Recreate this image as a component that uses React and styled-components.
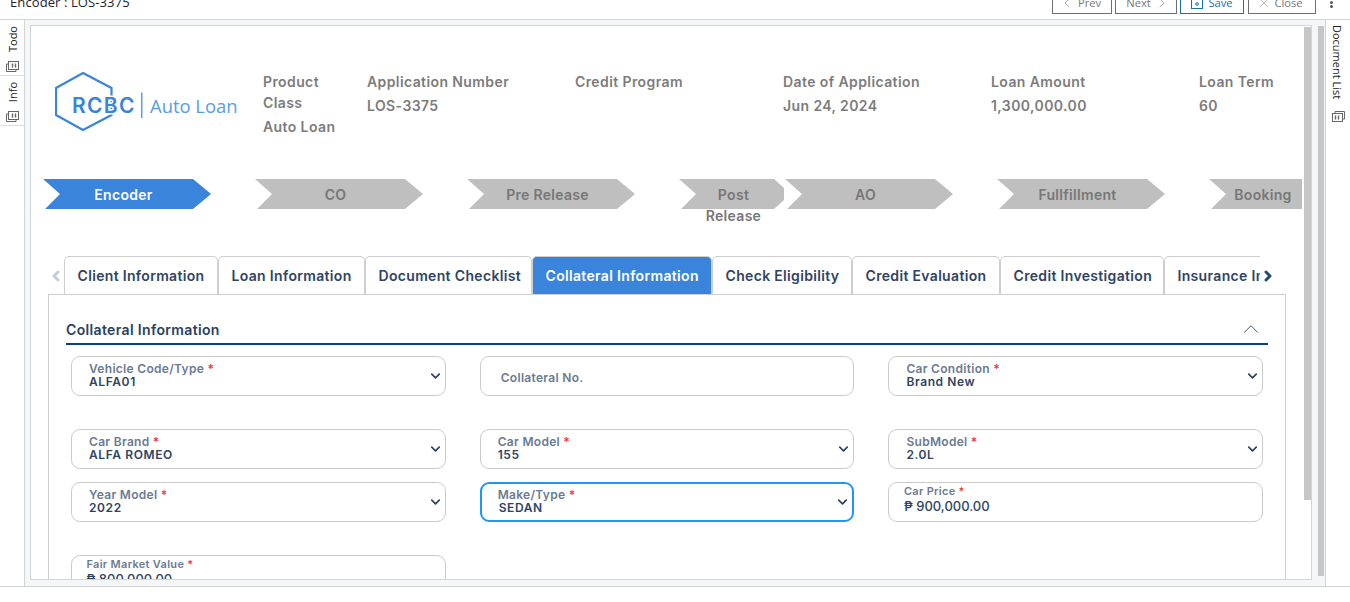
import React from 'react';
import styled, { createGlobalStyle } from 'styled-components';
import { ChevronLeft, ChevronRight, ChevronUp, ChevronDown, X } from 'lucide-react';

const GlobalStyle = createGlobalStyle`
  html, body {
    margin: 0;
    height: 100%;
    overflow: hidden;
    background: #fff;
  }
  * { box-sizing: border-box; }
`;

const Page = styled.div`
  width: 1350px;
  height: 602px;
  overflow: hidden;
  font-family: Inter, "Liberation Sans", sans-serif;
  color: #2f4463;
`;

const TopBar = styled.div`
  height: 20px;
  border-bottom: 1px solid #d3d4d6;
  display: flex;
  align-items: flex-end;
  justify-content: space-between;
  padding: 0 7px 5px 10px;
`;

const PageTitle = styled.div`
  font: 400 13px/18px "Open Sans", sans-serif;
  letter-spacing: 0.1px;
  color: #222;
  margin-bottom: 3px;
`;

const Actions = styled.div`
  display: flex;
  align-items: flex-end;
  gap: 3px;
`;

const ActionButton = styled.button`
  width: ${(p) => p.$w}px;
  height: 24px;
  background: #fff;
  border: 1px solid ${(p) => (p.$primary ? '#1d6fa8' : '#6e6e6e')};
  color: ${(p) => (p.$primary ? '#1d6fa8' : '#777')};
  font: 400 11.2px/1 "Open Sans", sans-serif;
  display: flex;
  align-items: center;
  justify-content: center;
  gap: ${(p) => (p.$primary ? 5 : 7)}px;
  padding: 1px 0 0;
  margin-left: ${(p) => p.$ml || 0}px;
  svg.lucide { margin: 0 -4px; }
`;

const Dots = styled.div`
  width: 24px;
  display: flex;
  flex-direction: column;
  align-items: center;
  gap: 1px;
  margin-bottom: 6px;
  span {
    width: 3px;
    height: 3px;
    border-radius: 50%;
    background: #555;
  }
`;

const Body = styled.div`
  height: 567px;
  display: flex;
  border-bottom: 1px solid #d3d4d6;
`;

const SideBar = styled.div`
  width: 25px;
  flex: none;
  background: #fff;
  ${(p) => (p.$right ? 'border-left: 1px solid #d3d4d6;' : 'border-right: 1px solid #d3d4d6;')}
`;

const SideItem = styled.div`
  height: ${(p) => p.$h}px;
  display: flex;
  flex-direction: column;
  align-items: center;
  padding-top: ${(p) => p.$top}px;
  border-bottom: ${(p) => (p.$plain ? 'none' : '1px solid #dcdcdc')};
  font: 400 11px/1 "Open Sans", sans-serif;
  color: #222;
`;

const SideText = styled.span`
  writing-mode: vertical-rl;
  transform: ${(p) => (p.$down ? 'translateX(-1px)' : 'rotate(180deg)')};
`;

const SideIcon = styled.svg`
  width: 13px;
  height: 11px;
  margin-top: ${(p) => p.$mt}px;
  fill: none;
  stroke: #666;
  stroke-width: 1;
  transform: ${(p) => (p.$flip ? 'rotate(180deg)' : 'none')};
`;

const Center = styled.div`
  flex: 1;
  min-width: 0;
  background: #f5f6f8;
  display: flex;
  padding: 5px 1px 6px 5px;
`;

const MainPanel = styled.div`
  width: 1282px;
  background: #fff;
  border: 1px solid #d3d4d6;
  display: flex;
  overflow: hidden;
`;

const ScrollArea = styled.div`
  width: 1273px;
  flex: none;
  overflow: hidden;
`;

const InnerBar = styled.div`
  width: 7px;
  height: 473px;
  background: #c6c6c6;
  margin: 1px 0 0 0;
  flex: none;
`;

const OuterBar = styled.div`
  width: 6px;
  height: 550px;
  background: #c6c6c6;
  margin: 1px 0 0 6px;
  flex: none;
`;

const Header = styled.div`
  height: 153px;
  display: flex;
  align-items: flex-start;
  padding: 45px 0 0 24px;
`;

const Logo = styled.svg`
  width: 186px;
  height: 60px;
  flex: none;
  margin-top: 1px;
`;

const Columns = styled.div`
  display: flex;
  margin-left: 22px;
  letter-spacing: 0.4px;
`;

const InfoCol = styled.div`
  width: ${(p) => p.$w}px;
  flex: none;
  font-size: 14px;
  font-weight: 600;
  color: #7c7c7c;
`;

const InfoLabel = styled.div`
  line-height: 21px;
  padding-right: 30px;
`;

const InfoValue = styled.div`
  line-height: 21px;
  margin-top: 3px;
`;

const Steps = styled.div`
  display: flex;
  width: 1260px;
  margin-left: 12px;
  overflow: hidden;
  height: 60px;
`;

const chevron =
  'polygon(0 0, calc(100% - 18px) 0, 100% 50%, calc(100% - 18px) 100%, 2px 100%, 17px 50%)';
const cutChevron =
  'polygon(0 0, calc(100% - 10px) 0, 100% 30%, 100% 70%, calc(100% - 10px) 100%, 2px 100%, 17px 50%)';
const flatChevron = 'polygon(0 0, 100% 0, 100% 100%, 2px 100%, 17px 50%)';

const Step = styled.div`
  flex: none;
  width: ${(p) => p.$w}px;
  margin-right: ${(p) => p.$mr}px;
  font-size: 14px;
  font-weight: 600;
  line-height: 21px;
  letter-spacing: 0.3px;
  color: ${(p) => (p.$active ? '#fff' : '#777')};
  text-align: center;
  position: relative;
  padding: 5px ${(p) => p.$pr}px 0 ${(p) => p.$pl}px;
  height: 60px;
  z-index: 0;
  &::before {
    content: '';
    position: absolute;
    left: 0;
    top: 0;
    width: 100%;
    height: 30px;
    z-index: -1;
    background: ${(p) => (p.$active ? '#3a84db' : '#bfbfbf')};
    clip-path: ${(p) => p.$shape};
  }
`;

const TabRow = styled.div`
  margin: 17px 0 0 17px;
  display: flex;
  align-items: flex-end;
  height: 38px;
  width: 1237px;
`;

const TabArrow = styled.div`
  width: 16px;
  flex: none;
  display: flex;
  justify-content: center;
  align-self: center;
  margin-top: 2px;
  color: ${(p) => (p.$off ? '#c5ccd6' : '#234a75')};
`;

const TabScroller = styled.div`
  display: flex;
  width: 1196px;
  flex: none;
  overflow: hidden;
`;

const Tab = styled.div`
  flex: none;
  width: ${(p) => p.$w}px;
  height: 38px;
  border: 1px solid #cfcfcf;
  border-bottom: none;
  border-radius: 5px 5px 0 0;
  background: ${(p) => (p.$active ? '#3a84db' : '#fff')};
  color: ${(p) => (p.$active ? '#fff' : '#2f4463')};
  font-size: 14px;
  font-weight: 600;
  letter-spacing: 0.33px;
  line-height: 37px;
  padding-left: 12.5px;
  white-space: nowrap;
`;

const TabPanel = styled.div`
  margin-left: 17px;
  width: 1238px;
  border: 1px solid #cfcfcf;
  padding: 0 17px;
  height: 300px;
`;

const SectionHead = styled.div`
  height: 50px;
  padding: 26px 0 0 0;
  border-bottom: 2px solid #0a4180;
  display: flex;
  align-items: flex-start;
  justify-content: space-between;
  font-size: 14px;
  font-weight: 600;
  letter-spacing: 0.35px;
  line-height: 18px;
  color: #2a4160;
  svg { margin: -5px 4px 0 0; color: #3c5272; }
`;

const FieldGrid = styled.div`
  display: grid;
  grid-template-columns: repeat(3, 374.7px);
  grid-template-rows: 40px 7px 40px 40px 7px 40px;
  column-gap: 34px;
  row-gap: 13px;
  margin: 11px 0 0 5px;
`;

const Field = styled.div`
  grid-row: ${(p) => p.$row};
  grid-column: ${(p) => p.$col};
  height: 40px;
  border: ${(p) => (p.$focus ? '2px solid #2196f3' : '1px solid #cbcbcb')};
  border-radius: 9px;
  padding: ${(p) => (p.$focus ? '4px 0 0 16px' : p.$small ? '2px 0 0 14.5px' : '5px 0 0 17px')};
  position: relative;
  font-size: 12px;
  font-weight: 600;
`;

const Label = styled.div`
  color: #6b7a92;
  font-size: ${(p) => (p.$small ? 11 : 12)}px;
  letter-spacing: 0.3px;
  line-height: 13px;
  b {
    color: #f03a3a;
    font-weight: 600;
  }
`;

const Value = styled.div`
  color: #2f4463;
  line-height: 13px;
  letter-spacing: 0.6px;
  margin-left: ${(p) => (p.$focus ? 1 : 0)}px;
`;

const PriceValue = styled.div`
  color: #2f4463;
  font-size: 13px;
  font-weight: 500;
  line-height: 15px;
  margin-top: 1px;
`;

const Caret = styled(ChevronDown)`
  position: absolute;
  right: 2px;
  top: 50%;
  transform: translateY(-50%);
  color: #2f4463;
`;

const GhostLabel = styled.div`
  color: #6b7a92;
  font-size: 12px;
  letter-spacing: 0.3px;
  line-height: 40px;
  margin: -4px 0 0 3px;
`;

const stepItems = [
  { name: 'Encoder', w: 168, mr: 44, active: true, pl: 17, pr: 24, shape: chevron },
  { name: 'CO', w: 168, mr: 44, pl: 17, pr: 24, shape: chevron },
  { name: 'Pre Release', w: 168, mr: 44, pl: 17, pr: 24, shape: chevron },
  { name: 'Post Release', w: 105, mr: 1, pl: 12, pr: 8, shape: cutChevron },
  { name: 'AO', w: 168, mr: 44, pl: 17, pr: 24, shape: chevron },
  { name: 'Fullfillment', w: 168, mr: 44, pl: 17, pr: 24, shape: chevron },
  { name: 'Booking', w: 93, mr: 0, pl: 24, pr: 9, shape: flatChevron },
];

const tabItems = [
  { name: 'Client Information', w: 154 },
  { name: 'Loan Information', w: 147 },
  { name: 'Document Checklist', w: 167 },
  { name: 'Collateral Information', w: 180, active: true },
  { name: 'Check Eligibility', w: 140 },
  { name: 'Credit Evaluation', w: 148 },
  { name: 'Credit Investigation', w: 164 },
  { name: 'Insurance Information', w: 170 },
];

const StackIcon = ({ mt, flip }) => (
  <SideIcon viewBox="0 0 13 11" $mt={mt} $flip={flip}>
    <rect x="2.5" y="0.5" width="10" height="8" />
    <path d="M2.5 3H0.5V10.5H10V8.5" />
    <path d="M6.5 2.5v4M9.5 2.5v4" strokeWidth="1.4" />
  </SideIcon>
);

const SelectField = ({ row, col, label, value, focus }) => (
  <Field $row={row} $col={col} $focus={focus}>
    <Label>
      {label} <b>*</b>
    </Label>
    <Value $focus={focus}>{value}</Value>
    <Caret size={15} strokeWidth={2.8} />
  </Field>
);

export default function App() {
  return (
    <Page>
      <GlobalStyle />
      <TopBar>
        <PageTitle>Encoder : LOS-3375</PageTitle>
        <Actions>
          <ActionButton $w={60}>
            <ChevronLeft size={16} strokeWidth={0.9} />
            Prev
          </ActionButton>
          <ActionButton $w={62}>
            Next
            <ChevronRight size={16} strokeWidth={0.9} />
          </ActionButton>
          <ActionButton $w={64} $primary>
            <svg width="12" height="12" viewBox="0 0 12 12" fill="none" stroke="currentColor">
              <rect x="0.5" y="0.5" width="11" height="11" />
              <path d="M3 .5v2h6v-2" />
              <circle cx="6" cy="7" r="1.3" />
            </svg>
            Save
          </ActionButton>
          <ActionButton $w={68} $ml={1}>
            <X size={14} strokeWidth={0.9} />
            Close
          </ActionButton>
          <Dots>
            <span />
            <span />
            <span />
          </Dots>
        </Actions>
      </TopBar>
      <Body>
        <SideBar>
          <SideItem $h={56} $top={6}>
            <SideText>Todo</SideText>
            <StackIcon mt={9} />
          </SideItem>
          <SideItem $h={50} $top={6}>
            <SideText>Info</SideText>
            <StackIcon mt={9} />
          </SideItem>
        </SideBar>
        <Center>
          <MainPanel>
            <ScrollArea>
              <Header>
                <Logo viewBox="0 0 186 60">
                  <path d="M28 1 56.5 16V43L28 58 1 43V16Z" fill="none" stroke="#3a84db" strokeWidth="2.2" />
                  <text x="17" y="41" fontFamily="Inter, sans-serif" fontSize="21" fontWeight="600" letterSpacing="1.3" fill="#3a84db" stroke="#fff" strokeWidth="3" paintOrder="stroke">RCBC</text>
                  <rect x="86.2" y="20.5" width="1.2" height="25.5" fill="#3a84db" />
                  <text x="95" y="41" fontFamily="'Open Sans', sans-serif" fontSize="18.4" fill="#5b9be4">Auto Loan</text>
                </Logo>
                <Columns>
                  <InfoCol $w={104}>
                    <InfoLabel>Product Class</InfoLabel>
                    <InfoValue>Auto Loan</InfoValue>
                  </InfoCol>
                  <InfoCol $w={208}>
                    <InfoLabel>Application Number</InfoLabel>
                    <InfoValue>LOS-3375</InfoValue>
                  </InfoCol>
                  <InfoCol $w={208}>
                    <InfoLabel>Credit Program</InfoLabel>
                  </InfoCol>
                  <InfoCol $w={208}>
                    <InfoLabel>Date of Application</InfoLabel>
                    <InfoValue>Jun 24, 2024</InfoValue>
                  </InfoCol>
                  <InfoCol $w={208}>
                    <InfoLabel>Loan Amount</InfoLabel>
                    <InfoValue>1,300,000.00</InfoValue>
                  </InfoCol>
                  <InfoCol $w={110}>
                    <InfoLabel>Loan Term</InfoLabel>
                    <InfoValue>60</InfoValue>
                  </InfoCol>
                </Columns>
              </Header>
              <Steps>
                {stepItems.map((s) => (
                  <Step key={s.name} $w={s.w} $mr={s.mr} $pl={s.pl} $pr={s.pr} $shape={s.shape} $active={s.active}>
                    {s.name}
                  </Step>
                ))}
              </Steps>
              <TabRow>
                <TabArrow $off>
                  <ChevronLeft size={16} strokeWidth={4.5} />
                </TabArrow>
                <TabScroller>
                  {tabItems.map((t) => (
                    <Tab key={t.name} $w={t.w} $active={t.active}>
                      {t.name}
                    </Tab>
                  ))}
                </TabScroller>
                <TabArrow>
                  <ChevronRight size={16} strokeWidth={4.5} />
                </TabArrow>
              </TabRow>
              <TabPanel>
                <SectionHead>
                  Collateral Information
                  <ChevronUp size={26} strokeWidth={0.9} />
                </SectionHead>
                <FieldGrid>
                  <SelectField row={1} col={1} label="Vehicle Code/Type" value="ALFA01" />
                  <Field $row={1} $col={2}>
                    <GhostLabel>Collateral No.</GhostLabel>
                  </Field>
                  <SelectField row={1} col={3} label="Car Condition" value="Brand New" />
                  <SelectField row={3} col={1} label="Car Brand" value="ALFA ROMEO" />
                  <SelectField row={3} col={2} label="Car Model" value="155" />
                  <SelectField row={3} col={3} label="SubModel" value="2.0L" />
                  <SelectField row={4} col={1} label="Year Model" value="2022" />
                  <SelectField row={4} col={2} label="Make/Type" value="SEDAN" focus />
                  <Field $row={4} $col={3} $small>
                    <Label $small>
                      Car Price <b>*</b>
                    </Label>
                    <PriceValue>₱ 900,000.00</PriceValue>
                  </Field>
                  <Field $row={6} $col={1} $small>
                    <Label $small>
                      Fair Market Value <b>*</b>
                    </Label>
                    <PriceValue>₱ 800,000.00</PriceValue>
                  </Field>
                </FieldGrid>
              </TabPanel>
            </ScrollArea>
            <InnerBar />
          </MainPanel>
          <OuterBar />
        </Center>
        <SideBar $right>
          <SideItem $h={110} $top={5} $plain>
            <SideText $down>Document List</SideText>
            <StackIcon mt={12} flip />
          </SideItem>
        </SideBar>
      </Body>
    </Page>
  );
}
